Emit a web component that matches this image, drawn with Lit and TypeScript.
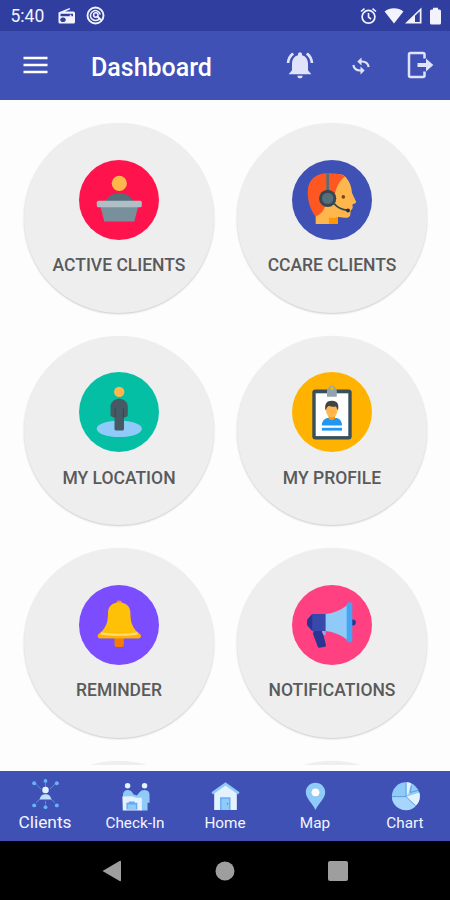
import { LitElement, html, svg, css, type TemplateResult, type SVGTemplateResult } from "lit";
import { customElement, property } from "lit/decorators.js";

interface Tile { label: string; color: string; art: SVGTemplateResult; }
interface Tab { label: string; active?: boolean; art: SVGTemplateResult; }

const podium = svg`
  <circle cx="40.3" cy="23.4" r="7.6" fill="#ffb74d"/>
  <path d="M26 42C28 36.5 33.500 33.300 40 33.300S52.500 36.500 54.500 42Z" fill="#546e7a"/>
  <path d="M21.300 46H59.300L55.300 61.500H25.300Z" fill="#78909c"/>
  <rect x="17.800" y="40.700" width="45" height="6.600" rx="1.600" fill="#b0bec5"/>`;

const agent = svg`
  <path d="M36 16C46 13 52 14 54 17.500C58 22 59.600 27 60 33L64 41.500Q64.400 43.500 60.500 44.300L60.700 48L58.500 51L58.300 55Q57.500 58 53 57.800L46 57V64H23.700V53Z" fill="#ffb74d"/>
  <path d="M37 57.500Q42 58.500 46 57V64H37Z" fill="#ff9800"/>
  <path d="M53 16.300C48 20 45 26 43 33L33 46C32 51 28 55 23.500 56.500C18 49 15.700 41 15.700 32C15.700 20 24 13.300 35 13.300C43 13.300 49.500 14 53 16.300Z" fill="#ff5722"/>
  <path d="M35.700 13.400V31" stroke="#546e7a" stroke-width="2.700"/>
  <path d="M42 43.500Q47 49.500 56 50.300" fill="none" stroke="#37474f" stroke-width="1.900"/>
  <circle cx="56" cy="50.500" r="2" fill="#263238"/>
  <circle cx="35.700" cy="38.400" r="8.600" fill="#37474f"/>
  <circle cx="35.700" cy="38.400" r="5.700" fill="#546e7a"/>
  <circle cx="51.300" cy="36.900" r="1.800" fill="#784719"/>`;

const person = svg`
  <ellipse cx="40.300" cy="56.800" rx="22.600" ry="8.300" fill="#90caf9"/>
  <circle cx="40.200" cy="19.900" r="5.200" fill="#ffb74d"/>
  <path d="M40.200 26.800C45.500 26.800 48.800 30.500 48.800 35V42.500Q48.800 45 45 45.500V57Q45 58.500 43.500 58.500H37Q35.500 58.500 35.500 57V45.500Q31.500 45 31.500 42.500V35C31.500 30.500 35 26.800 40.200 26.800Z" fill="#455a64"/>
  <path d="M36.200 36V45.500M44.400 36V45.500" stroke="#37474f" stroke-width="1"/>`;

const badge = svg`
  <rect x="20.300" y="17.500" width="39.400" height="50" rx="3.300" fill="#37505b"/>
  <rect x="23.700" y="21.300" width="32.600" height="42.800" fill="#fff"/>
  <path d="M35 24.800V18.500Q35 16.500 36.500 16A3.700 3.700 0 0 1 43.300 16Q44.800 16.500 44.800 18.500V24.800Z" fill="#90a4ae"/>
  <circle cx="39.900" cy="16.200" r="1.700" fill="#ffb300"/>
  <path d="M29.800 53.500C29.800 48.500 33 46 36.500 46H43.500C47 46 50 48.500 50 53.500Z" fill="#2196f3"/>
  <path d="M36.500 43H43V46.500Q39.800 50 36.500 46.500Z" fill="#ff9800"/>
  <ellipse cx="39.700" cy="38.500" rx="5.700" ry="7" fill="#ffb74d"/>
  <path d="M33.500 38.500C32 31.500 35.500 28.500 40 28.700C45 28.500 47.500 32 45.900 38.500L44 34.500Q39.500 35.500 37 33.800Q35 34.500 33.500 38.500Z" fill="#424242"/>
  <rect x="29.800" y="55.800" width="20.200" height="2.800" fill="#2196f3"/>`;

const bell = svg`
  <rect x="35.500" y="50" width="9.400" height="12" rx="2.300" fill="#f57c00"/>
  <circle cx="40.200" cy="18.500" r="3.100" fill="#ff9800"/>
  <path d="M40.200 17.600C47 17.600 51.400 21.500 51.400 28C51.400 38 53.500 43.500 61.700 50Q62.300 52.500 60 53.300H20.400Q18.200 52.500 18.800 50C27 43.500 29 38 29 28C29 21.500 33.400 17.600 40.200 17.600Z" fill="#ffc107"/>
  <path d="M21.600 47.500H58.900L61.700 50.300Q62 53.300 59.500 53.300H21Q18.500 53.300 18.800 50.300Z" fill="#ffb300"/>
  <path d="M22 48.500Q40 51 58.500 48.500" fill="none" stroke="#ffdb6b" stroke-width="2.400"/>`;

const megaphone = svg`
  <circle cx="60.800" cy="37.400" r="3" fill="#283593"/>
  <path d="M22 44H29.700Q29.500 47 31.500 50L34 60.500Q34 61.500 33 61.700L27.500 62.800Q26.300 63 25.900 62L21 49Z" fill="#283593"/>
  <path d="M30 46H33.700V50Q31.500 51 31 49Z" fill="#90a8e8"/>
  <path d="M20.300 29H33.700V46H20.300L15.500 40.500Q14.500 37.500 15.500 34.500Z" fill="#3949ab"/>
  <path d="M20.300 29V46L15.500 40.500Q14.500 37.500 15.500 34.500Z" fill="#283593"/>
  <path d="M33.700 29Q46 27.500 55 20.200V54.500Q46 47.500 33.700 46Z" fill="#90caf9"/>
  <path d="M54.700 19Q54.700 17.300 57.500 17.300T60.300 19V55.700Q60.300 57.500 57.500 57.500T54.700 55.700Z" fill="#42a5f5"/>`;

const tiles: Tile[] = [
  { label: "ACTIVE CLIENTS", color: "#ff134d", art: podium },
  { label: "CCARE CLIENTS", color: "#3f51b5", art: agent },
  { label: "MY LOCATION", color: "#05bfa5", art: person },
  { label: "MY PROFILE", color: "#ffb300", art: badge },
  { label: "REMINDER", color: "#7c4dff", art: bell },
  { label: "NOTIFICATIONS", color: "#ff4081", art: megaphone },
  { label: "", color: "#3f51b5", art: svg`` },
  { label: "", color: "#ff134d", art: svg`` },
];

/* Tab icons share a 32-unit box. */
const tabs: Tab[] = [
  { label: "Clients", active: true, art: svg`
    <path d="M5.500 5.500L11 11M26.500 5.500L21 11M5.500 26L11 21M26.500 26L21 21M16 4V9M16 24V28" stroke="#5f8fdc" stroke-width="1"/>
    <g fill="#64b5f6"><circle cx="3.500" cy="4.500" r="2.200"/><circle cx="16" cy="2" r="2.100"/><circle cx="28.500" cy="4.500" r="2.200"/><circle cx="3.500" cy="29" r="2.200"/><circle cx="16" cy="31" r="2.100"/><circle cx="28.500" cy="29" r="2.200"/></g>
    <circle cx="16" cy="12" r="3.600" fill="#e3f2fd"/><path d="M9.500 22.500Q10.500 16.800 16 16.800T22.500 22.500Z" fill="#bbdefb"/>` },
  { label: "Check-In", art: svg`
    <circle cx="7.300" cy="6.300" r="3" fill="#e3f2fd"/><circle cx="26" cy="6.300" r="3" fill="#e3f2fd"/>
    <path d="M2 19Q1.500 11 7 10.800Q12 10.800 13.500 15.500L17.500 17L20.500 13.500Q22 10.800 26 10.800Q32 11 31.500 17.500V25H29.300V33.500H22V20H3Z" fill="#90caf9"/>
    <path d="M1.500 18L12 17.700L17 19.500H23V33.500H2Z" fill="#e3f2fd"/>
    <path d="M6 25H8.500V23.500H15V25H18V32.500H6Z" fill="#64aaf2"/><path d="M7.500 27H16.500V32H7.500Z" fill="#90caf9"/>` },
  { label: "Home", art: svg`
    <path d="M3.500 14L16 5L28.500 14V33H3.500Z" fill="#e3f2fd"/>
    <path d="M16 2.500L31.500 13.500L30 15.800L16 6L2 15.800L.5 13.500Z" fill="#90caf9"/>
    <path d="M10 19H21.500V33H10Z" fill="#64aaf2"/><path d="M11.500 20.500H20V33H11.500Z" fill="#90caf9"/><circle cx="18.300" cy="26" r=".8" fill="#3f72c8"/>` },
  { label: "Map", art: svg`
    <path d="M16 3C10 3 5.300 7.700 5.300 13.500C5.300 20.500 12.700 25.500 16 33C19.300 25.500 26.700 20.500 26.700 13.500C26.700 7.700 22 3 16 3Z" fill="#90caf9"/>
    <circle cx="16" cy="13.500" r="4.300" fill="#fff"/>` },
  { label: "Chart", art: svg`
    <g transform="translate(.3 -.6) scale(1.020 1.020)"><circle cx="15.700" cy="18" r="15" fill="#90caf9"/>
    <path d="M16 18.500H.700A15.200 15.200 0 0 0 26.300 28.800Z" fill="#a9d5fc"/>
    <path d="M16 18.500L30.500 14A15 15 0 0 1 26.500 28.300Z" fill="#e3f2fd"/>
    <path d="M16.500 17V3Q19.500 3 21.500 4L18.500 15.500Z" fill="#e3f2fd"/>
    <path d="M.7 18.500H16V3.500M16 18.500L26.500 28.500M20.500 14L29.500 11.500M20.500 14L21.800 6.500" fill="none" stroke="#4d93dc" stroke-width=".9"/></g>` },
];

@customElement("status-bar")
class StatusBar extends LitElement {
  static styles = css`
    :host { display: flex; align-items: center; height: 31px; box-sizing: border-box; padding: 0 8px 0 10.500px; background: #303f9f; color: #f2f3ff; font: 400 17.500px Roboto, sans-serif; }
    .time { width: 46.500px; line-height: 31px; padding-top: 1px; }
    svg { display: block; flex: none; fill: currentColor; }
    svg.cast { margin-left: 8.500px; fill: none; stroke: currentColor; }
    .radio { margin-top: -1px; }
    .alarm { margin-left: auto; }
    .wifi { margin-left: 7px; }
    .signal { margin-left: 1px; }
    .battery { margin-left: 7px; }
  `;
  render() {
    return html`
      <span class="time">5:40</span>
      <svg class="radio" width="20" height="20" viewBox="0 0 20 20">
        <path fill-rule="evenodd" d="M2 7.300L12.500 3L13.200 4.300L8 6.500H16.500Q18 6.500 18 8V17Q18 18.500 16.500 18.500H3Q1.500 18.500 1.500 17V8Q1.500 7.500 2 7.300ZM3.500 8.700V11.200H12.800V9.700H14.300V11.200H16V8.700ZM6 12.500A2.300 2.300 0 1 0 6 17A2.300 2.300 0 1 0 6 12.500Z"/>
      </svg>
      <svg class="cast" width="19" height="19" viewBox="0 0 19 19">
        <circle cx="9.500" cy="9.500" r="8" stroke-width="1.900"/>
        <path d="M13.500 12.500A5 5 0 1 1 14.300 8.500" stroke-width="1.500"/>
        <circle cx="9.800" cy="9" r="2.200" stroke-width="1.500"/><path d="M11 10L15 14" stroke-width="1.800"/>
      </svg>
      <svg class="alarm" width="17" height="18" viewBox="0 0 17 18">
        <circle cx="8.500" cy="9.800" r="6.400" fill="none" stroke="currentColor" stroke-width="1.700"/>
        <path d="M8.500 6V10.200L11 12M1 4.500L4.500 1.600M16 4.500L12.500 1.600" fill="none" stroke="currentColor" stroke-width="1.600"/>
      </svg>
      <svg class="wifi" width="20" height="17" viewBox="0 0 20 17"><path d="M10 16.500L.6 4.500C6 .2 14 .2 19.400 4.500Z"/></svg>
      <svg class="signal" width="17" height="17" viewBox="0 0 17 17"><path fill-rule="evenodd" d="M0 16.500L16.500 .5V16.500ZM10 8.800V15H14.800V4.200Z"/></svg>
      <svg class="battery" width="13" height="18" viewBox="0 0 13 18"><path d="M4 .8H9V2.500H10.500Q12 2.500 12 4V16Q12 17.500 10.500 17.500H2.500Q1 17.500 1 16V4Q1 2.500 2.500 2.500H4Z"/></svg>
    `;
  }
}

@customElement("app-bar")
class AppBar extends LitElement {
  static styles = css`
    :host { display: flex; align-items: center; height: 69.300px; box-sizing: border-box; padding: 0 16px 2px 23px; background: #3f51b5; color: #dfe3fb; }
    svg { display: block; flex: none; }
    h1 { margin: 6px auto 0 43px; font: 500 25px/32px Roboto, sans-serif; color: #fff; }
    .bell { margin-right: 1px; }
    .sync { margin: 2px 36px 0 34px; }
  `;
  render() {
    return html`
      <svg width="25" height="20" viewBox="0 0 25 20"><path d="M.5 3H24.500M.5 10H24.500M.5 17H24.500" stroke="#fff" stroke-width="2.700"/></svg>
      <h1>Dashboard</h1>
      <svg class="bell" width="32" height="32" viewBox="0 0 24 24" fill="currentColor">
        <path d="M7.580 4.080L6.150 2.650C3.750 4.480 2.170 7.300 2.030 10.500h2c.15-2.650 1.510-4.970 3.550-6.420zM19.970 10.500h2c-.15-3.200-1.730-6.020-4.120-7.850l-1.420 1.430c2.020 1.450 3.390 3.770 3.540 6.420zM18 11c0-3.070-1.640-5.640-4.500-6.320V4c0-.83-.67-1.500-1.500-1.500s-1.500.67-1.500 1.500v.68C7.630 5.360 6 7.920 6 11v5l-2.500 3H20.500L18 16zM10 20c0 1.100.9 2 2 2s2-.9 2-2z"/>
      </svg>
      <svg class="sync" width="20" height="20" viewBox="0 0 20 20">
        <path d="M8 5.500H11Q16.500 5.500 17.700 11M12 14.500H9Q3.500 14.500 2.300 9" fill="none" stroke="currentColor" stroke-width="2.200"/>
        <path d="M10.500 1.500V9.500L6.300 5.500ZM9.500 10.500V18.500L13.700 14.500Z" fill="currentColor"/>
      </svg>
      <svg width="27" height="28" viewBox="0 0 27 28">
        <path d="M17.500 7.500V3.500Q17.500 2 16 2H3.500Q2 2 2 3.500V24.500Q2 26 3.500 26H16Q17.500 26 17.500 24.500V20.500" fill="none" stroke="currentColor" stroke-width="2.500"/>
        <path d="M10.500 12H19V7.500L26.300 14L19 20.500V16H10.500Z" fill="currentColor"/>
      </svg>
    `;
  }
}

@customElement("dashboard-tile")
class DashboardTile extends LitElement {
  @property({ attribute: false }) tile!: Tile;
  static styles = css`
    :host { display: flex; flex-direction: column; align-items: center; height: 189.500px; box-sizing: border-box; padding-top: 36.700px; border-radius: 50%; background: #eee; box-shadow: 0 1px 2px rgba(0, 0, 0, 0.2); }
    svg { display: block; }
    .label { margin: 13.500px 0 0 1px; font: 500 17.500px/24px Roboto, sans-serif; color: #5a5a5a; white-space: nowrap; }
  `;
  render() {
    return html`
      <svg width="80" height="80" viewBox="0 0 80 80"><circle cx="40" cy="40" r="40" fill=${this.tile.color} />${this.tile.art}</svg>
      <span class="label">${this.tile.label}</span>
    `;
  }
}

@customElement("tab-bar")
class TabBar extends LitElement {
  static styles = css`
    :host { display: grid; grid-template-columns: repeat(5, 1fr); height: 70.500px; background: #3f51b5; }
    .tab { display: flex; flex-direction: column; align-items: center; padding-top: 9px; font: 400 15.300px/20px Roboto, sans-serif; color: #f4f5ff; }
    .tab svg { display: block; width: 29px; height: 31px; margin-bottom: 2px; overflow: visible; }
    .active { font-size: 17.300px; padding-top: 8px; }
  `;
  render(): TemplateResult {
    return html`${tabs.map((t) => html`
      <div class=${t.active ? "tab active" : "tab"}>
        <svg viewBox="0 0 32 34">${t.art}</svg>
        <span>${t.label}</span>
      </div>`)}`;
  }
}

@customElement("app-root")
class AppRoot extends LitElement {
  static styles = css`
    :host { display: flex; flex-direction: column; width: 450px; height: 900px; overflow: hidden; background: #fdfdfd; }
    status-bar, app-bar, tab-bar, .system { flex: none; }
    main { flex: 1; min-height: 0; overflow: hidden; display: grid; grid-template-columns: 190px 190px; grid-auto-rows: 189.500px; justify-content: center; align-content: start; gap: 23px; padding-top: 23px; margin-bottom: 5.500px; }
    .system { display: flex; align-items: center; justify-content: center; gap: 93px; height: 59px; background: #000; fill: #9e9e9e; }
    .system svg { display: block; width: 20px; height: 22px; }
  `;
  render() {
    return html`
      <status-bar></status-bar>
      <app-bar></app-bar>
      <main>${tiles.map((t) => html`<dashboard-tile .tile=${t}></dashboard-tile>`)}</main>
      <tab-bar></tab-bar>
      <div class="system">
        <svg viewBox="0 0 20 22"><path d="M.5 11L18 .8Q19 .5 19 1.800V20.200Q19 21.500 18 21.200Z"/></svg>
        <svg viewBox="0 0 20 22"><circle cx="10" cy="11" r="9.500"/></svg>
        <svg viewBox="0 0 20 22"><rect y="1" width="20" height="20" rx="2"/></svg>
      </div>
    `;
  }
}
